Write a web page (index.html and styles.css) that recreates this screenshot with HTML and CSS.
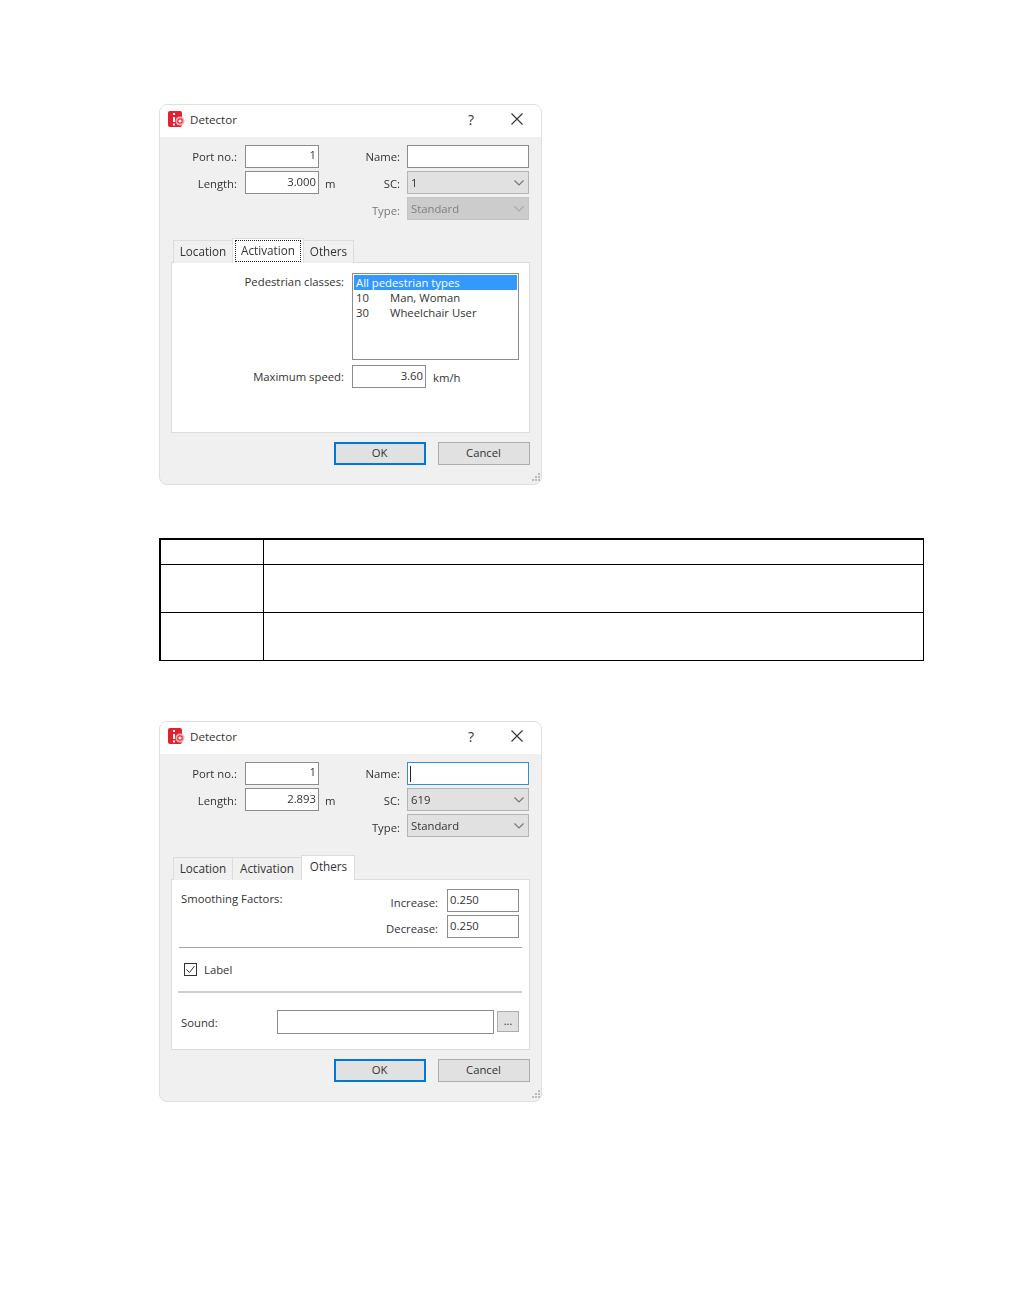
FILE: index.html
```html
<!DOCTYPE html>
<html lang="en">
<head>
<meta charset="utf-8">
<title>Detector</title>
<link rel="stylesheet" href="styles.css">
</head>
<body>
<main class="page">

<section class="dialog">
  <header class="titlebar">
    <svg class="app-icon" width="18" height="18" viewBox="0 0 18 18"><rect x="0" y="0" width="14" height="16" rx="2" fill="#e3202f"/><rect x="5" y="2" width="2" height="2" fill="#fff"/><rect x="5" y="6" width="2" height="5" fill="#fff"/><rect x="5" y="12.500" width="2" height="2" fill="#fff"/><circle cx="12" cy="10" r="4.500" fill="#f5a9ae"/><circle cx="12" cy="10" r="2.200" fill="#fff" stroke="#d9303d" stroke-width="1.200"/></svg>
    <span class="title">Detector</span>
    <span class="help">?</span>
    <svg class="close" width="12" height="12" viewBox="0 0 12 12"><path d="M.5.500l11 11M11.500.500l-11 11" stroke="#333" stroke-width="1.100" fill="none"/></svg>
  </header>
  <div class="form">
    <label class="lbl lbl-top">Port no.:</label><div class="field num num-top">1</div><label class="lbl lbl-mid lbl-top">Name:</label><div class="field"></div>
    <label class="lbl">Length:</label><div class="field num">3.000</div><div class="lbl lbl-mid lbl-split"><span>m</span><span>SC:</span></div><div class="combo"><span>1</span><svg class="chev" width="10" height="6" viewBox="0 0 10 6"><path d="M.5.500L5 5 9.500.500" fill="none" stroke="#777" stroke-width="1.200"/></svg></div>
    <span></span><span></span><label class="lbl lbl-mid lbl-low lbl-off">Type:</label><div class="combo combo-off"><span>Standard</span><svg class="chev" width="10" height="6" viewBox="0 0 10 6"><path d="M.5.500L5 5 9.500.500" fill="none" stroke="#aaa" stroke-width="1.200"/></svg></div>
  </div>
  <nav class="tabs">
    <span class="tab tab-loc">Location</span>
    <span class="tab tab-act tab-on"><span class="focus-ring">Activation</span></span>
    <span class="tab tab-oth">Others</span>
  </nav>
  <div class="pane pane-act">
    <span class="lbl">Pedestrian classes:</span>
    <div class="listbox">
      <div class="opt opt-on"><span>All pedestrian types</span></div>
      <div class="opt"><span class="opt-id">10</span><span>Man, Woman</span></div>
      <div class="opt"><span class="opt-id">30</span><span>Wheelchair User</span></div>
    </div>
    <span class="lbl">Maximum speed:</span>
    <div class="speed"><div class="field num">3.60</div><span>km/h</span></div>
  </div>
  <footer class="actions"><button class="btn btn-def">OK</button><button class="btn">Cancel</button></footer>
  <svg class="grip" width="12" height="12" viewBox="0 0 12 12"><path d="M9 1h2v2H9zM6 4h2v2H6zM9 4h2v2H9zM3 7h2v2H3zM6 7h2v2H6zM9 7h2v2H9z" fill="#bdbdbd"/></svg>
</section>

<table class="grid">
  <tr class="r-head"><td class="c-first"></td><td></td></tr>
  <tr class="r-body"><td></td><td></td></tr>
  <tr class="r-body"><td></td><td></td></tr>
</table>

<section class="dialog">
  <header class="titlebar">
    <svg class="app-icon" width="18" height="18" viewBox="0 0 18 18"><rect x="0" y="0" width="14" height="16" rx="2" fill="#e3202f"/><rect x="5" y="2" width="2" height="2" fill="#fff"/><rect x="5" y="6" width="2" height="5" fill="#fff"/><rect x="5" y="12.500" width="2" height="2" fill="#fff"/><circle cx="12" cy="10" r="4.500" fill="#f5a9ae"/><circle cx="12" cy="10" r="2.200" fill="#fff" stroke="#d9303d" stroke-width="1.200"/></svg>
    <span class="title">Detector</span>
    <span class="help">?</span>
    <svg class="close" width="12" height="12" viewBox="0 0 12 12"><path d="M.5.500l11 11M11.500.500l-11 11" stroke="#333" stroke-width="1.100" fill="none"/></svg>
  </header>
  <div class="form">
    <label class="lbl lbl-top">Port no.:</label><div class="field num num-top">1</div><label class="lbl lbl-mid lbl-top">Name:</label><div class="field field-focus"><i class="caret"></i></div>
    <label class="lbl">Length:</label><div class="field num">2.893</div><div class="lbl lbl-mid lbl-split"><span>m</span><span>SC:</span></div><div class="combo"><span>619</span><svg class="chev" width="10" height="6" viewBox="0 0 10 6"><path d="M.5.500L5 5 9.500.500" fill="none" stroke="#777" stroke-width="1.200"/></svg></div>
    <span></span><span></span><label class="lbl lbl-mid lbl-low">Type:</label><div class="combo"><span>Standard</span><svg class="chev" width="10" height="6" viewBox="0 0 10 6"><path d="M.5.500L5 5 9.500.500" fill="none" stroke="#777" stroke-width="1.200"/></svg></div>
  </div>
  <nav class="tabs">
    <span class="tab tab-loc">Location</span>
    <span class="tab tab-act">Activation</span>
    <span class="tab tab-oth tab-on">Others</span>
  </nav>
  <div class="pane pane-oth">
    <div class="smooth">
      <span class="smooth-title">Smoothing Factors:</span>
      <div class="smooth-fields">
        <span class="lbl">Increase:</span><div class="field">0.250</div>
        <span class="lbl">Decrease:</span><div class="field">0.250</div>
      </div>
    </div>
    <hr class="rule rule-thin">
    <div class="check-row">
      <svg class="check" width="13" height="13" viewBox="0 0 13 13"><rect x=".5" y=".5" width="12" height="12" fill="#fff" stroke="#333"/><path d="M2.500 6.500l3 3 5-6.500" fill="none" stroke="#333" stroke-width="1"/></svg>
      <span>Label</span>
    </div>
    <hr class="rule rule-thick">
    <div class="sound">
      <span class="sound-lbl">Sound:</span>
      <div class="field sound-field"></div>
      <button class="btn btn-more">...</button>
    </div>
  </div>
  <footer class="actions"><button class="btn btn-def">OK</button><button class="btn">Cancel</button></footer>
  <svg class="grip" width="12" height="12" viewBox="0 0 12 12"><path d="M9 1h2v2H9zM6 4h2v2H6zM9 4h2v2H9zM3 7h2v2H3zM6 7h2v2H6zM9 7h2v2H9z" fill="#bdbdbd"/></svg>
</section>

</main>
</body>
</html>
```

FILE: styles.css
```css
* { box-sizing: border-box; }
html, body { margin: 0; background: #fff; }
body {
  font-family: "Open Sans", "Noto Sans", sans-serif;
  font-size: 11.3px;
  color: #333;
}
.page { padding: 104px 0 0 159px; height: 1299px; overflow: hidden; }

.dialog {
  position: relative;
  width: 383px;
  height: 381px;
  background: #f0f0f0;
  border: 1px solid #dfdfdf;
  border-radius: 8px;
  overflow: hidden;
  filter: blur(.3px);
}
.titlebar {
  height: 32px;
  background: #fff;
  display: flex;
  align-items: center;
  padding: 0 0 4px 8px;
  color: #333;
}
.app-icon { margin: 2px 4px 0 0; flex: none; }
.title { font-size: 11.6px; flex: 1; }
.help { font-size: 14px; width: 10px; margin-right: 33px; }
.close { margin-right: 18px; }

.form {
  display: grid;
  grid-template-columns: 85px 74px 88px 122px;
  grid-auto-rows: 23px;
  row-gap: 3px;
  padding-top: 8px;
}
.lbl {
  display: flex;
  align-items: center;
  justify-content: flex-end;
  padding-right: 8px;
  padding-top: 2px;
}
.lbl-mid { padding-right: 7px; }
.lbl-top { padding-top: 0; }
.lbl-low { padding-top: 4px; }
.lbl-split { justify-content: space-between; padding-left: 6px; }
.lbl-off { color: #777; }
.field {
  height: 23px;
  background: #fff;
  border: 1px solid #8c8c8c;
  padding: 0 2px 3px 2px;
  display: flex;
  align-items: center;
}
.num { justify-content: flex-end; }
.num-top { padding-bottom: 4px; }
.field-focus { border-color: #2f8fdc; padding-left: 1px; }
.caret { width: 1px; height: 16px; background: #222; margin-left: 1px; margin-top: 3px; }
.combo {
  height: 23px;
  background: #e1e1e1;
  border: 1px solid #b4b4b4;
  padding: 0 4px 1px 3px;
  display: flex;
  align-items: center;
  justify-content: space-between;
}
.combo-off { background: #cccccc; border-color: #c4c4c4; color: #808080; }
.chev { margin-top: 1px; }

.tabs { display: flex; align-items: flex-end; margin: 18px 0 -1px 13px; height: 25px; position: relative; z-index: 1; font-size: 11.7px; }
.tab {
  height: 23px;
  background: #f0f0f0;
  border: 1px solid #dcdcdc;
  border-bottom: 0;
  border-left-width: 0;
  display: flex;
  align-items: center;
  justify-content: center;
  padding: 0 0 3px;
}
.tab-loc { width: 60px; border-left-width: 1px; }
.tab-act { width: 69px; }
.tab-oth { width: 51px; padding-left: 1px; }
.tab-on { height: 25px; background: #fff; border-left-width: 1px; position: relative; }
.tab-act.tab-on { width: 72px; margin: 0 -1px 0 -1px; padding: 0 0 2px; }
.tab-oth.tab-on { width: 54px; margin: 0 0 0 -1px; padding: 0 0 5px 1px; }
.focus-ring {
  width: 66px;
  height: 22px;
  margin-top: 2px;
  border: 1px dotted #222;
  display: flex;
  align-items: center;
  justify-content: center;
  padding-bottom: 3px;
}

.pane {
  width: 359px;
  height: 171px;
  margin-left: 11px;
  background: #fff;
  border: 1px solid #dcdcdc;
}
.pane-act {
  display: grid;
  grid-template-columns: 180px 1fr;
  grid-template-rows: 87px 23px;
  row-gap: 5px;
  padding-top: 10px;
}
.pane-act > .lbl { align-items: flex-start; padding-top: 1px; }
.pane-act > .lbl:nth-of-type(2) { padding-top: 4px; }
.listbox { width: 167px; height: 87px; border: 1px solid #8c8c8c; padding: 1px; }
.opt { height: 15px; padding-left: 2px; display: flex; align-items: center; line-height: 15px; }
.opt-on { background: #3399ff; color: #fff; }
.opt-id { width: 34px; }
.speed { display: flex; align-items: center; gap: 7px; }
.speed .field { width: 74px; }
.speed span { padding-top: 1px; }

.actions { display: flex; justify-content: flex-end; gap: 12px; margin: 9px 11px 0 0; }
.btn {
  width: 92px;
  height: 23px;
  background: #e1e1e1;
  border: 1px solid #adadad;
  font: inherit;
  color: #333;
  padding: 0 1px 3px 0;
}
.btn-def { border: 2px solid #0078d7; }
.grip { position: absolute; right: 0; bottom: 0; }

.grid {
  width: 765px;
  margin: 53px 0 60px;
  border-collapse: separate;
  border-spacing: 0;
  border-top: 2px solid #000;
  border-left: 2px solid #000;
  border-right: 1px solid #000;
}
.grid td { padding: 0; border-bottom: 1px solid #000; }
.grid td + td { border-left: 1px solid #000; }
.c-first { width: 102px; }
.r-head td { height: 25px; }
.r-body td { height: 48px; }

.pane-oth { padding-top: 9px; }
.smooth { display: flex; justify-content: space-between; padding: 0 9px; height: 49px; }
.smooth-title { padding-top: 2px; }
.smooth-fields {
  display: grid;
  grid-template-columns: 1fr 72px;
  grid-auto-rows: 23px;
  row-gap: 3px;
  width: 139px;
  margin-right: 1px;
}
.smooth-fields .lbl { padding-right: 9px; padding-top: 3px; }
.rule { border: 0; margin: 0 7px; }
.rule-thin { height: 1px; background: #a0a0a0; margin-top: 9px; }
.rule-thick { height: 2px; background: #cfcfcf; margin-left: 6px; }
.check-row { display: flex; align-items: center; gap: 7px; padding-left: 12px; height: 43px; }
.sound { display: flex; align-items: flex-start; padding: 17px 9px 0; }
.sound-lbl { width: 96px; padding-top: 5px; }
.sound-field { width: 217px; height: 24px; }
.btn-more { width: 22px; height: 21px; margin: 1px 0 0 3px; font-size: 11px; padding: 0 0 3px; }
```
